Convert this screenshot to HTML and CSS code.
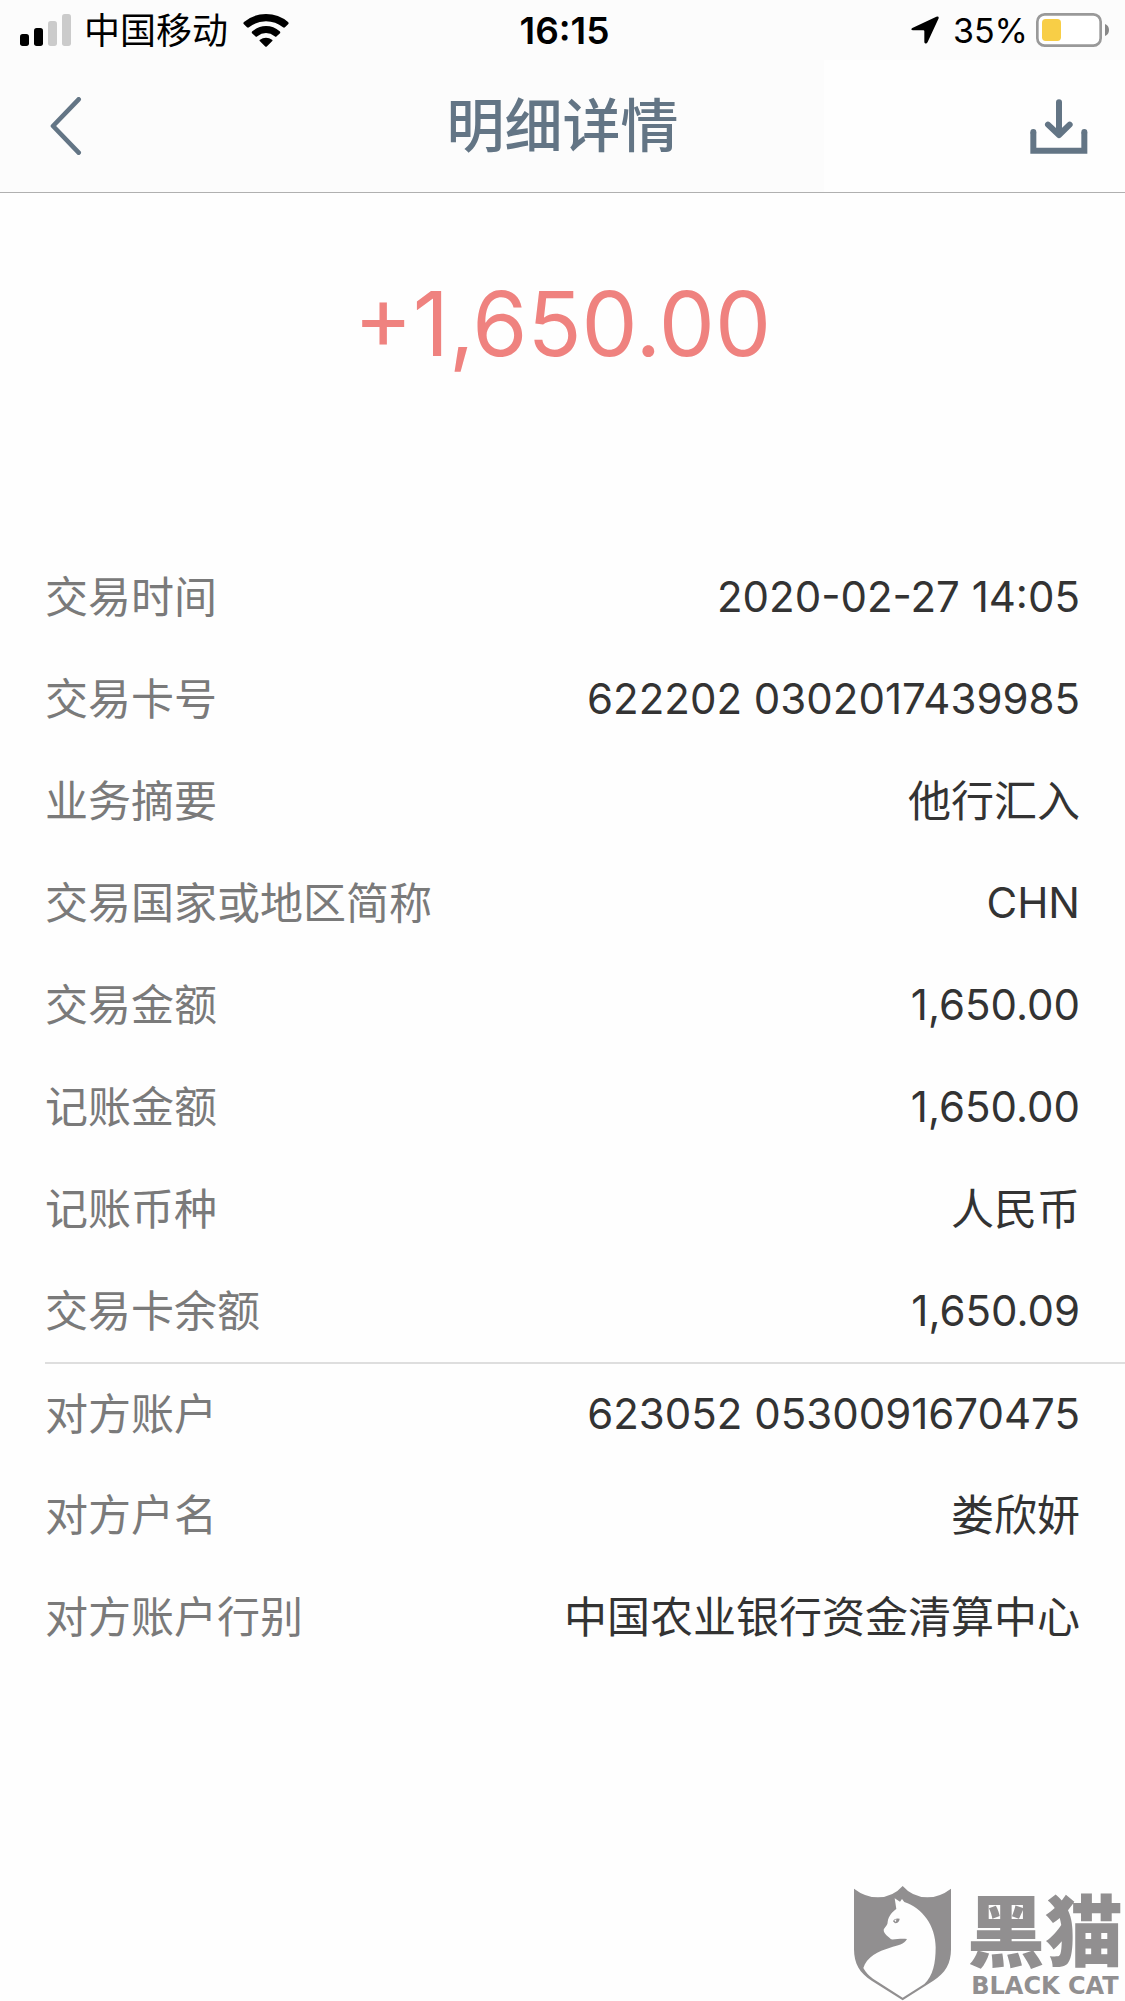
FILE: index.html
```
<!DOCTYPE html>
<html lang="zh-CN">
<head>
<meta charset="utf-8">
<meta name="viewport" content="width=device-width, initial-scale=1">
<title>明细详情</title>
<link rel="stylesheet" href="styles.css">
</head>
<body>
<div class="page">
  <header class="top">
    <div class="status">
      <div class="status-left">
        <svg class="signal" viewBox="0 0 153 96" aria-hidden="true">
          <rect x="0" y="60" width="27" height="36" rx="8"/>
          <rect x="42" y="42" width="27" height="54" rx="8"/>
          <rect class="off" x="84" y="21" width="27" height="75" rx="8"/>
          <rect class="off" x="126" y="0" width="27" height="96" rx="8"/>
        </svg>
        <span class="carrier">中国移动</span>
        <svg class="wifi" viewBox="0 0 138 99" aria-hidden="true">
          <path d="M2 30Q0 27 3 24Q31 0 69 0T135 24Q138 27 136 30L126 40Q123 42 120 40Q98 22 69 22T18 40Q15 42 12 40Z"/>
          <path d="M27 58Q25 55 28 52Q46 36 69 36T110 52Q113 55 111 58L101 67Q98 70 95 67Q83 57 69 57T43 67Q40 70 37 67Z"/>
          <path d="M51 82Q48 79 51 77Q59 71 69 71T87 77Q90 79 87 82L72 97Q69 100 66 97Z"/>
        </svg>
      </div>
      <time class="clock">16:15</time>
      <div class="status-right">
        <svg class="location" viewBox="0 0 84 84" aria-hidden="true">
          <path d="M4 36L76 2Q84-1 83 7L50 78Q47 84 42 82Q40 81 40 77V46Q40 43 37 43H5Q-3 41 4 36Z"/>
        </svg>
        <span class="percent">35%</span>
        <svg class="battery" viewBox="0 0 219 102" aria-hidden="true">
          <rect class="shell" x="4" y="4" width="190" height="94" rx="22"/>
          <rect class="charge" x="18" y="18" width="57" height="66" rx="11"/>
          <path class="cap" d="M207 33Q219 38 219 51T207 69Z"/>
        </svg>
      </div>
    </div>
    <nav class="nav">
      <button class="nav-button back" type="button" aria-label="返回">
        <svg class="back-icon" viewBox="0 0 96 174"><path d="M86 7L9 87L86 167"/></svg>
      </button>
      <h1 class="title">明细详情</h1>
      <div class="nav-end">
        <button class="nav-button" type="button" aria-label="下载">
          <svg class="download-icon" viewBox="0 0 174 165">
            <path class="tray" d="M10 100V155H163V100"/>
            <path d="M87 10V106M54 77L87 108L119 77"/>
            <circle cx="10" cy="99" r="9"/><circle cx="163" cy="99" r="9"/>
          </svg>
        </button>
      </div>
    </nav>
  </header>

  <main class="content">
    <p class="amount">+1,650.00</p>
    <dl class="details">
      <div class="row"><dt>交易时间</dt><dd class="figure">2020-02-27 14:05</dd></div>
      <div class="row"><dt>交易卡号</dt><dd class="figure">622202 0302017439985</dd></div>
      <div class="row"><dt>业务摘要</dt><dd>他行汇入</dd></div>
      <div class="row"><dt>交易国家或地区简称</dt><dd class="figure">CHN</dd></div>
      <div class="row"><dt>交易金额</dt><dd class="figure">1,650.00</dd></div>
      <div class="row"><dt>记账金额</dt><dd class="figure">1,650.00</dd></div>
      <div class="row"><dt>记账币种</dt><dd>人民币</dd></div>
      <div class="row"><dt>交易卡余额</dt><dd class="figure">1,650.09</dd></div>
    </dl>
    <dl class="details counterparty">
      <div class="row"><dt>对方账户</dt><dd class="figure">623052 0530091670475</dd></div>
      <div class="row"><dt>对方户名</dt><dd>娄欣妍</dd></div>
      <div class="row"><dt>对方账户行别</dt><dd>中国农业银行资金清算中心</dd></div>
    </dl>
  </main>

  <footer class="brand">
    <svg class="shield" viewBox="0 0 291 345" aria-hidden="true">
      <path class="plate" d="M0 8Q34 34 72 34Q116 34 146 0Q176 34 220 34Q257 34 291 8V190C291 232 274 262 238 284L146 343L53 284C17 262 0 232 0 190Z"/>
      <path class="cat" d="M122 37L138 47L144 39L151 48C205 65 245 120 245 184C245 232 237 270 211 294L146 335L57 278Q39 266 28 246C37 213 73 195 108 185C132 178 151 175 159 159C141 156 126 161 111 160C104 151 89 145 89 131C92 123 101 119 101 107C104 89 116 77 127 69Z"/>
      <path class="plate" d="M117 106Q122 95 137 98Q136 110 123 112Z"/>
      <path class="cat" d="M121 103L127 100L126 109Z"/>
    </svg>
    <div class="brand-text">
      <span class="brand-name">黑猫</span>
      <span class="brand-latin">BLACK CAT</span>
    </div>
  </footer>
</div>
</body>
</html>
```
FILE: styles.css
```
* {
  box-sizing: border-box;
}

body {
  margin: 0;
  background: #fefefe;
  color: #333;
  font-family: Inter, "Noto Sans CJK SC", sans-serif;
}

.page {
  display: flex;
  flex-direction: column;
  min-height: 100vh;
}

.top {
  background: #fcfcfc;
  border-bottom: 1px solid #b0b0b0;
}

.status {
  display: grid;
  grid-template-columns: 1fr auto 1fr;
  align-items: center;
  height: 60px;
  padding: 0 16px 0 20px;
  color: #000;
}

.status-left,
.status-right {
  display: flex;
  align-items: center;
}

.status-right {
  justify-content: flex-end;
}

.signal {
  width: 51px;
  height: 32px;
}

.signal .off {
  fill: #cbcbcb;
}

.carrier {
  margin: 0 15px 0 13px;
  padding-top: 2px;
  font-size: 36px;
  line-height: 58px;
}

.wifi {
  width: 46px;
  height: 33px;
}

.clock {
  padding-top: 2px;
  font-size: 37px;
  font-weight: 600;
  line-height: 58px;
}

.location {
  width: 28px;
  height: 28px;
}

.percent {
  margin: 0 8px 0 14px;
  padding-top: 2px;
  font-size: 34px;
  line-height: 58px;
}

.battery {
  width: 73px;
  height: 34px;
}

.shell {
  fill: #fff;
  stroke: #999;
  stroke-width: 8;
}

.charge {
  fill: #f8ce46;
}

.cap {
  fill: #888;
}

.nav {
  display: grid;
  grid-template-columns: 301px 1fr 301px;
  align-items: center;
  height: 132px;
  color: #637585;
}

.title {
  margin: 0;
  font-size: 58px;
  font-weight: 500;
  line-height: 84px;
  text-align: center;
}

.nav-button {
  display: flex;
  padding: 0;
  border: 0;
  background: none;
  color: inherit;
}

.back {
  padding: 0 50px;
}

.back-icon {
  width: 32px;
  height: 58px;
  fill: none;
  stroke: currentColor;
  stroke-width: 14;
  stroke-linecap: round;
  stroke-linejoin: round;
}

.nav-end {
  display: flex;
  align-items: center;
  justify-content: flex-end;
  height: 100%;
  padding-right: 37px;
  background: #fefefe;
}

.download-icon {
  width: 58px;
  height: 55px;
  fill: none;
  stroke: currentColor;
  stroke-width: 18;
  stroke-linecap: round;
  stroke-linejoin: round;
}

.download-icon .tray {
  stroke-linecap: butt;
  stroke-linejoin: miter;
}

.download-icon circle {
  fill: currentColor;
  stroke: none;
}

.amount {
  margin: 0;
  padding: 71px 0 162px;
  color: #ef827f;
  font-size: 89px;
  line-height: 120px;
  text-align: center;
}

.details {
  margin: 0 0 0 45px;
}

.counterparty {
  border-top: 2px solid #dedede;
}

.row {
  display: flex;
  align-items: center;
  justify-content: space-between;
  height: 102px;
  padding-right: 45px;
  font-size: 43px;
  line-height: 60px;
}

.counterparty .row:first-child {
  height: 100px;
}

.row dt {
  color: #7a7a7a;
}

.row dd {
  margin: 0;
}

.row .figure {
  font-size: 42px;
}

.brand {
  display: flex;
  align-items: flex-end;
  justify-content: flex-end;
  gap: 16px;
  margin-top: auto;
  padding-right: 2px;
  color: #918f90;
}

.shield {
  width: 97px;
  height: 115px;
}

.plate {
  fill: #918f90;
}

.cat {
  fill: #fefefe;
}

.brand-text {
  display: flex;
  flex-direction: column;
  align-items: center;
}

.brand-name {
  font-size: 78px;
  font-weight: 900;
  line-height: 76px;
}

.brand-latin {
  font-family: "DejaVu Sans", sans-serif;
  font-size: 24px;
  font-weight: 700;
  line-height: 30px;
}
```
